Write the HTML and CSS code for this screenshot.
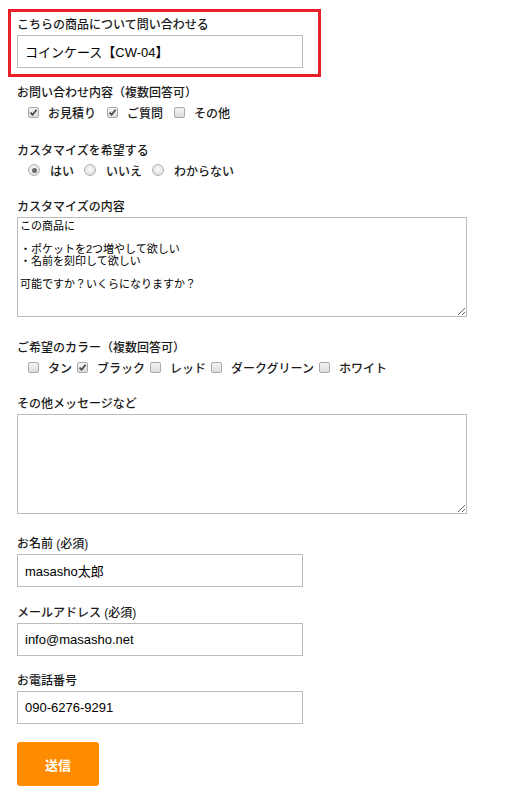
FILE: index.html
```html
<!DOCTYPE html>
<html lang="ja">
<head>
<meta charset="utf-8">
<title>お問い合わせ</title>
<link rel="stylesheet" href="styles.css">
</head>
<body>
<form class="form">
  <div class="highlight">
    <label class="lbl">こちらの商品について問い合わせる</label>
    <input class="text" type="text" value="コインケース【CW-04】">
  </div>

  <div class="field f-inquiry">
    <div class="lbl">お問い合わせ内容（複数回答可）</div>
    <div class="choices c-inquiry">
      <label class="choice"><span class="box on"><svg viewBox="0 0 11 11"><path d="M2.6 5.6 L4.6 7.8 L8.6 2.8"/></svg></span>お見積り</label>
      <label class="choice"><span class="box on"><svg viewBox="0 0 11 11"><path d="M2.6 5.6 L4.6 7.8 L8.6 2.8"/></svg></span>ご質問</label>
      <label class="choice"><span class="box"></span>その他</label>
    </div>
  </div>

  <div class="field f-custom">
    <div class="lbl">カスタマイズを希望する</div>
    <div class="choices c-radio">
      <label class="choice"><span class="radio on"></span>はい</label>
      <label class="choice"><span class="radio"></span>いいえ</label>
      <label class="choice"><span class="radio"></span>わからない</label>
    </div>
  </div>

  <div class="field f-detail">
    <label class="lbl">カスタマイズの内容</label>
    <textarea class="area">この商品に

・ポケットを2つ増やして欲しい
・名前を刻印して欲しい

可能ですか？いくらになりますか？</textarea>
  </div>

  <div class="field f-color">
    <div class="lbl">ご希望のカラー（複数回答可）</div>
    <div class="choices c-color">
      <label class="choice"><span class="box"></span>タン</label>
      <label class="choice"><span class="box on"><svg viewBox="0 0 11 11"><path d="M2.6 5.6 L4.6 7.8 L8.6 2.8"/></svg></span>ブラック</label>
      <label class="choice"><span class="box"></span>レッド</label>
      <label class="choice"><span class="box"></span>ダークグリーン</label>
      <label class="choice"><span class="box"></span>ホワイト</label>
    </div>
  </div>

  <div class="field f-msg">
    <label class="lbl">その他メッセージなど</label>
    <textarea class="area"></textarea>
  </div>

  <div class="field f-name">
    <label class="lbl">お名前 (必須)</label>
    <input class="text" type="text" value="masasho太郎">
  </div>

  <div class="field f-mail">
    <label class="lbl">メールアドレス (必須)</label>
    <input class="text" type="text" value="info@masasho.net">
  </div>

  <div class="field f-tel">
    <label class="lbl">お電話番号</label>
    <input class="text" type="text" value="090-6276-9291">
  </div>

  <div class="field f-submit">
    <button class="submit" type="button">送信</button>
  </div>
</form>
</body>
</html>
```

FILE: styles.css
```css
html, body {
  margin: 0;
  padding: 0;
  background: #fff;
}

body {
  font-family: "Liberation Sans", "Noto Sans CJK JP", sans-serif;
  color: #222;
}

.form {
  padding: 9px 8px 0 8px;
}

.highlight {
  box-sizing: border-box;
  width: 313px;
  border: 3px solid #e8202a;
  padding: 5px 6px 6px 6px;
}

.lbl {
  display: block;
  font-size: 12px;
  line-height: 16px;
  font-weight: 500;
  color: #1a1a1a;
  margin-bottom: 2px;
}

.field {
  padding-left: 9px;
}

.text {
  display: block;
  box-sizing: border-box;
  width: 286px;
  height: 33px;
  margin: 0;
  border: 1px solid #bbb;
  border-radius: 0;
  padding: 0 7px;
  font-family: "Liberation Sans", "Noto Sans CJK JP", sans-serif;
  font-size: 13px;
  color: #000;
  background: #fff;
  outline: none;
}

.area {
  display: block;
  box-sizing: border-box;
  width: 450px;
  height: 100px;
  margin: 0;
  border: 1px solid #bbb;
  border-radius: 0;
  padding: 3px 2px;
  font-family: "Liberation Sans", "Noto Sans CJK JP", sans-serif;
  font-size: 11px;
  line-height: 11.5px;
  color: #000;
  background: #fff;
  outline: none;
}

.choices {
  display: flex;
  align-items: center;
  gap: 11px;
  padding-left: 11px;
  height: 18px;
  font-size: 12px;
  font-weight: 500;
  color: #1a1a1a;
}

.c-radio { gap: 10px; }
.c-color { gap: 5px; }

.choice {
  display: flex;
  align-items: center;
  gap: 9px;
  white-space: nowrap;
}

.c-radio .choice { gap: 10px; }

.box {
  box-sizing: border-box;
  width: 11px;
  height: 11px;
  border: 1px solid #a9a9a9;
  border-radius: 2px;
  background: linear-gradient(#f4f4f4, #dcdcdc);
  display: flex;
  align-items: center;
  justify-content: center;
}

.box svg {
  width: 11px;
  height: 11px;
  flex: none;
}

.box svg path {
  fill: none;
  stroke: #444;
  stroke-width: 1.7;
}

.radio {
  box-sizing: border-box;
  width: 12px;
  height: 12px;
  border: 1px solid #b0b0b0;
  border-radius: 50%;
  background: radial-gradient(circle at 50% 40%, #fafafa, #dadada);
  display: flex;
  align-items: center;
  justify-content: center;
}

.radio.on::after {
  content: "";
  width: 5px;
  height: 5px;
  border-radius: 50%;
  background: #6a6a6a;
}

.f-inquiry { margin-top: 8px; }
.f-custom { margin-top: 22px; }
.f-detail { margin-top: 20px; }
.f-color { margin-top: 23px; }
.f-msg { margin-top: 20px; }
.f-name { margin-top: 22px; }
.f-mail { margin-top: 18px; }
.f-tel { margin-top: 17px; }
.f-submit { margin-top: 18px; }

.submit {
  display: block;
  width: 82px;
  height: 44px;
  border: none;
  border-radius: 3px;
  background: #ff8c00;
  color: #fff;
  font-family: "Liberation Sans", "Noto Sans CJK JP", sans-serif;
  font-size: 13px;
  font-weight: bold;
  padding: 0;
  cursor: pointer;
}
```
